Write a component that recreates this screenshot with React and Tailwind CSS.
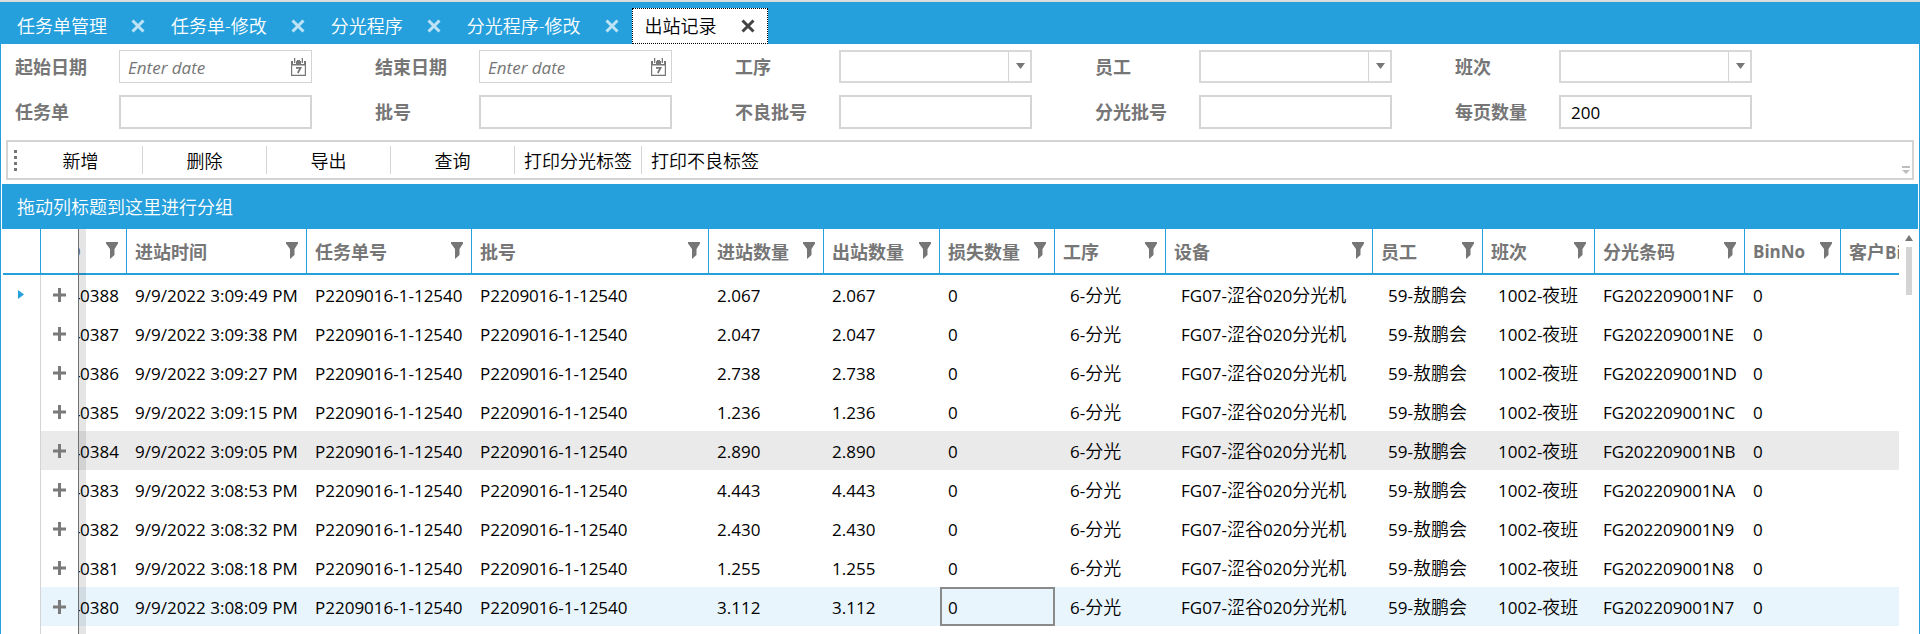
import React from "react";

const TABS = [
  { name: "任务单管理" },
  { name: "任务单-修改" },
  { name: "分光程序" },
  { name: "分光程序-修改" },
  { name: "出站记录", active: true },
];

const FIELDS = [
  { id: "start", label: "起始日期", kind: "date" },
  { id: "end", label: "结束日期", kind: "date" },
  { id: "process", label: "工序", kind: "select" },
  { id: "staff", label: "员工", kind: "select" },
  { id: "shift", label: "班次", kind: "select" },
  { id: "task", label: "任务单", kind: "text" },
  { id: "lot", label: "批号", kind: "text" },
  { id: "badLot", label: "不良批号", kind: "text" },
  { id: "binLot", label: "分光批号", kind: "text" },
  { id: "pageSize", label: "每页数量", kind: "text", value: "200" },
];

const ACTIONS = ["新增", "删除", "导出", "查询", "打印分光标签", "打印不良标签"];

const COLUMNS = [
  { title: "进站时间", width: "w-[180px]" },
  { title: "任务单号", width: "w-[165px]" },
  { title: "批号", width: "w-[237px]" },
  { title: "进站数量", width: "w-[115px]" },
  { title: "出站数量", width: "w-[116px]" },
  { title: "损失数量", width: "w-[115px]" },
  { title: "工序", width: "w-[111px]", indent: true },
  { title: "设备", width: "w-[207px]", indent: true },
  { title: "员工", width: "w-[110px]", indent: true },
  { title: "班次", width: "w-[112px]", indent: true },
  { title: "分光条码", width: "w-[150px]" },
  { title: "BinNo", width: "w-[96px]" },
];

const ROWS = [
  ["40388", "3:09:49", "2.067", "NF"],
  ["40387", "3:09:38", "2.047", "NE"],
  ["40386", "3:09:27", "2.738", "ND"],
  ["40385", "3:09:15", "1.236", "NC"],
  ["40384", "3:09:05", "2.890", "NB"],
  ["40383", "3:08:53", "4.443", "NA"],
  ["40382", "3:08:32", "2.430", "N9"],
  ["40381", "3:08:18", "1.255", "N8"],
  ["40380", "3:08:09", "3.112", "N7"],
].map(([id, time, qty, code]) => ({
  id,
  cells: [
    `9/9/2022 ${time} PM`,
    "P2209016-1-12540",
    "P2209016-1-12540",
    qty,
    qty,
    "0",
    "6-分光",
    "FG07-涩谷020分光机",
    "59-敖鹏会",
    "1002-夜班",
    `FG202209001${code}`,
    "0",
  ],
}));

const HOVERED = 4;
const SELECTED = 8;
const SELECTED_CELL = 5;

// Chinese runs are set one pixel larger and slightly lighter than Latin runs.
function Mixed({ children }) {
  return children.split(/([\u4e00-\u9fff]+)/).map((part, i) =>
    i % 2 ? (
      <span key={i} className="text-[18px] font-[350]">
        {part}
      </span>
    ) : (
      part
    )
  );
}

function CloseIcon() {
  return (
    <svg viewBox="0 0 14 14" className="h-3.5 w-3.5" fill="none" stroke="currentColor" strokeWidth="3">
      <path d="M1.5 1.5 12.5 12.5M12.5 1.5 1.5 12.5" />
    </svg>
  );
}

function CalendarIcon() {
  return (
    <svg viewBox="0 0 15 18" className="h-[18px] w-[15px]">
      <path fill="#767676" fillRule="evenodd" d="M0 3h2v3h3V3h5v3h3V3h2v15H0zM1.200 7.500v9.300h12.600V7.500z" />
      <path fill="#767676" d="M3 0h1.300v5H3zM10.700 0H12v5h-1.300zM6 2h3v2H6z" />
      <path fill="none" stroke="#767676" strokeWidth="1.800" d="M5 9.900h4.500L6.800 15" />
    </svg>
  );
}

function FilterIcon() {
  return (
    <svg viewBox="0 0 12 17" className="h-[17px] w-3">
      <path fill="#767676" d="M0 0h12v1.500L8.500 7v6L4 17V7L0 1.500z" />
    </svg>
  );
}

function FilterButton({ title }) {
  return (
    <button type="button" aria-label={`${title} 筛选`} className="shrink-0 self-start pt-[13px]">
      <FilterIcon />
    </button>
  );
}

function Field({ field }) {
  const box = "h-full w-full bg-white text-[17px] font-normal text-black outline-none";
  return (
    <div className="flex items-center">
      <label htmlFor={field.id} className="w-[104px] shrink-0 font-semibold text-[#767676]">
        {field.label}
      </label>
      {field.kind === "date" && (
        <div className="flex h-[33px] w-[193px] items-center border border-[#d4d4d4] pr-[5px]">
          <input
            id={field.id}
            type="text"
            placeholder="Enter date"
            className={`${box} min-w-0 px-2 pt-0.5 placeholder:text-[#767676] placeholder:italic`}
          />
          <button type="button" aria-label={`${field.label} 日历`} className="shrink-0">
            <CalendarIcon />
          </button>
        </div>
      )}
      {field.kind === "select" && (
        <div className="relative h-[33px] w-[193px] border-2 border-[#d8d8d8]">
          <select id={field.id} className={`${box} appearance-none px-2`}>
            <option></option>
          </select>
          <span className="pointer-events-none absolute inset-y-0 right-0 flex w-[22px] items-center justify-center border-l border-[#d4d4d4] bg-white pb-0.5 pl-0.5">
            <svg viewBox="0 0 9 6" className="h-1.5 w-[9px]">
              <path d="M0 0h9L4.500 6z" fill="#767676" />
            </svg>
          </span>
        </div>
      )}
      {field.kind === "text" && (
        <div className="h-[34px] w-[193px] border-2 border-[#d4d4d4]">
          <input id={field.id} type="text" defaultValue={field.value} className={`${box} px-2.5`} />
        </div>
      )}
    </div>
  );
}

function TabBar() {
  return (
    <nav className="flex h-[42px] items-end bg-[#26a0dc] pl-1">
      {TABS.map((tab) => (
        <div
          key={tab.name}
          className={`flex h-9 items-center gap-6 px-[13px] ${
            tab.active
              ? "bg-white text-black outline-1 -outline-offset-1 outline-black outline-dotted"
              : "text-white"
          }`}
        >
          <button type="button" className="whitespace-nowrap">
            {tab.name}
          </button>
          <button
            type="button"
            aria-label={`关闭 ${tab.name}`}
            className={tab.active ? "text-[#444444]" : "text-[#bee3f5]"}
          >
            <CloseIcon />
          </button>
        </div>
      ))}
    </nav>
  );
}

function Toolbar() {
  return (
    <div className="mx-1 mt-[11px] mb-1 flex h-10 items-center border-2 border-[#d4d4d4] pl-1.5">
      <div className="flex flex-col gap-[3px]">
        {[0, 1, 2, 3].map((dot) => (
          <span key={dot} className="h-[3px] w-[3px] bg-[#767676]" />
        ))}
      </div>
      <div className="flex pl-0.5">
        {ACTIONS.map((name) => (
          <button
            key={name}
            type="button"
            className="h-7 min-w-[124px] border-r border-[#d4d4d4] px-[9px] pt-0.5 whitespace-nowrap text-black last:border-r-0"
          >
            {name}
          </button>
        ))}
      </div>
      <button type="button" aria-label="更多" className="mr-0.5 mb-1 ml-auto self-end">
        <svg viewBox="0 0 8 8" className="h-2 w-2">
          <path d="M0 0h8v2H0zM0 4h8L4 8z" fill="#bdbdbd" />
        </svg>
      </button>
    </div>
  );
}

function Grid() {
  const head = "h-[46px] border-r border-b-2 border-[#26a0dc] p-0 text-left font-semibold text-[#767676]";
  return (
    <div className="relative flex-1 overflow-hidden">
      <table className="w-full table-fixed border-separate border-spacing-0">
        <thead>
          <tr>
            <th className={`${head} w-[38px]`} aria-label="当前行" />
            <th className={`${head} w-[38px]`} aria-label="展开" />
            <th className={`${head} w-12`}>
              <div className="flex h-full items-center justify-between overflow-hidden pr-2">
                <span className="flex w-0.5 justify-end overflow-hidden">ID</span>
                <FilterButton title="ID" />
              </div>
            </th>
            {COLUMNS.map((col) => (
              <th key={col.title} className={`${head} ${col.width}`}>
                <div className="flex h-full items-center justify-between px-2">
                  <span className={col.title === "BinNo" ? "pt-0.5 text-[17px] font-bold" : "pt-0.5"}>
                    {col.title}
                  </span>
                  <FilterButton title={col.title} />
                </div>
              </th>
            ))}
            <th className={`${head} border-r-0`}>
              <div className="overflow-hidden pt-0.5 pl-2 whitespace-nowrap">
                客户<span className="text-[17px] font-bold">BinNo</span>
              </div>
            </th>
          </tr>
        </thead>
        <tbody className="text-[17px] font-normal text-black">
          {ROWS.map((row, r) => {
            const tone = r === HOVERED ? "bg-[#eaeaea]" : r === SELECTED ? "bg-[#e9f5fc]" : "bg-white";
            return (
              <tr key={row.id}>
                <td className="h-[39px] border-r border-[#d4d4d4] p-0 pr-0.5">
                  {r === 0 && (
                    <svg viewBox="0 0 6 9" className="mx-auto h-[9px] w-1.5">
                      <path d="M0 0 6 4.500 0 9z" fill="#26a0dc" />
                    </svg>
                  )}
                </td>
                <td className={`${tone} p-0 pr-0.5`}>
                  <button type="button" aria-label="展开行" className="mx-auto block">
                    <svg viewBox="0 0 13 14" className="h-3.5 w-[13px]">
                      <path d="M5 0h3v14H5zM0 5.500h13v3H0z" fill="#7a7a7a" />
                    </svg>
                  </button>
                </td>
                <td className={`${tone} p-0`}>
                  <div className="flex justify-end overflow-hidden pt-0.5 pr-2">{row.id}</div>
                </td>
                {row.cells.map((text, c) => (
                  <td
                    key={c}
                    className={`${tone} pt-0.5 pr-0 pb-0 leading-6 whitespace-nowrap ${
                      COLUMNS[c].indent ? "pl-[15px]" : "pl-2"
                    } ${r === SELECTED && c === SELECTED_CELL ? "outline-2 -outline-offset-2 outline-[#8a8a8a]" : ""}`}
                  >
                    <Mixed>{text}</Mixed>
                  </td>
                ))}
                <td className={tone} />
              </tr>
            );
          })}
        </tbody>
      </table>
      <div className="flex h-4">
        <span className="w-[38px] border-r border-[#d4d4d4]" />
      </div>
      <div className="pointer-events-none absolute inset-y-0 left-[75px] w-2 border-l border-[#707070] bg-black/10" />
    </div>
  );
}

export default function App() {
  return (
    <div className="flex h-screen flex-col overflow-hidden border-t-2 border-t-[#dcdcdc] bg-white font-['Open_Sans','Noto_Sans_CJK_SC',sans-serif] text-[18px] leading-6 font-[350]">
      <TabBar />
      <main className="flex min-h-0 flex-1 flex-col border-r border-l border-[#26a0dc] px-px">
        <form className="grid grid-cols-[repeat(5,360px)] gap-y-3 pt-1.5 pl-[13px]">
          {FIELDS.map((field) => (
            <Field key={field.id} field={field} />
          ))}
        </form>
        <Toolbar />
        <div className="flex h-[45px] shrink-0 items-center bg-[#26a0dc] pl-[15px] text-white">
          拖动列标题到这里进行分组
        </div>
        <div className="flex min-h-0 flex-1 pl-px">
          <Grid />
          <div className="flex w-[19px] flex-col items-center gap-1.5 pt-1.5">
            <svg viewBox="0 0 8 6" className="h-1.5 w-2">
              <path d="M4 0 8 6H0z" fill="#767676" />
            </svg>
            <span className="h-12 w-1.5 bg-[#d4d4d4]" />
          </div>
        </div>
      </main>
    </div>
  );
}
